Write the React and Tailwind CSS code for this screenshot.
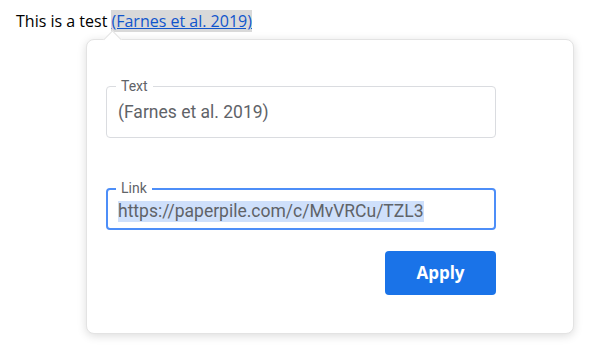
import React from "react";

function Field({ label, focused, children }) {
  return (
    <div
      className={
        focused
          ? "relative w-[390px] h-[42px] border-2 border-[#4d8ef8] rounded-[4px] flex items-center pl-[10px] pt-[4px]"
          : "relative w-[390px] h-[52px] border border-[#dadce0] rounded-[4px] flex items-center pl-[11px]"
      }
    >
      <span
        className={
          focused
            ? "absolute -top-[11px] left-[8px] bg-white px-[5px] text-[14px] leading-[18px] text-[#5f6368]"
            : "absolute -top-[10px] left-[9px] bg-white px-[5px] text-[14px] leading-[18px] text-[#5f6368]"
        }
      >
        {label}
      </span>
      {children}
    </div>
  );
}

export default function App() {
  return (
    <div className="w-[594px] h-[362px] bg-white overflow-hidden font-['Open_Sans',sans-serif]">
      {/* Document line */}
      <div className="pt-[10px] pl-[16px] text-[16px] leading-[23px] text-black">
        This is a test{" "}
        <span className="bg-[#d9d9d9] text-[#1155cc] underline decoration-[#1155cc]">(Farnes et al. 2019)</span>
      </div>

      {/* Link popup */}
      <div className="ml-[86px] mt-[6px] w-[488px] h-[295px] relative bg-white rounded-[8px] border border-[#e3e3e3] shadow-[0_2px_10px_rgba(0,0,0,0.14)] pl-[19px] pt-[46px] flex flex-col font-['Roboto',sans-serif]">
        <div className="absolute left-[19px] -top-[7px] w-[13px] h-[13px] bg-white border-t border-l border-[#e3e3e3] rotate-45" />

        <Field label="Text">
          <span className="text-[17.5px] text-[#5f6368]">(Farnes et al. 2019)</span>
        </Field>

        <div className="mt-[50px]">
          <Field label="Link" focused>
            <span className="text-[17.5px] leading-[21px] text-[#5f6368] bg-[#cfe0fb]">https://paperpile.com/c/MvVRCu/TZL3</span>
          </Field>
        </div>

        <div className="w-[390px] flex justify-end mt-[21px]">
          <button className="w-[111px] h-[44px] rounded-[4px] bg-[#1a73e8] text-white text-[17px] font-bold font-['Open_Sans',sans-serif]">
            Apply
          </button>
        </div>
      </div>
    </div>
  );
}
